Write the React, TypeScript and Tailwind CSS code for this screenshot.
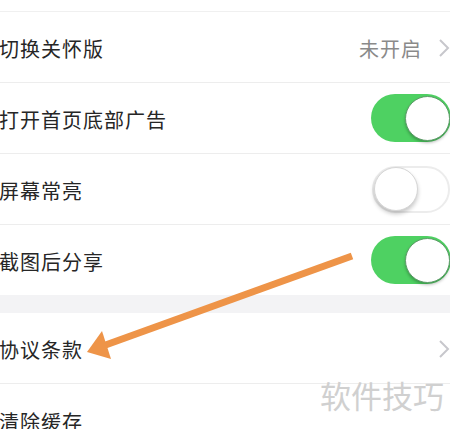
import React from "react";

function Toggle({ on }: { on: boolean }) {
  if (on) {
    return (
      <div className="w-[80px] h-[48px] rounded-full bg-[#4ed162] flex items-center justify-end pr-[1px] mr-[-1px]">
        <div className="w-[45px] h-[45px] rounded-full bg-white border border-[#5f9b6a] shadow-[0_2px_3px_rgba(0,0,0,0.25)]" />
      </div>
    );
  }
  return (
    <div className="w-[78px] h-[47px] rounded-full bg-white border-2 border-[#ececec] flex items-center justify-start">
      <div className="w-[44px] h-[44px] rounded-full bg-white border border-[#d6d6d6] shadow-[0_3px_4px_rgba(0,0,0,0.22)]" />
    </div>
  );
}

function Chevron() {
  return (
    <svg width="12" height="20" viewBox="0 0 12 20" className="ml-[16px] mt-[2px]">
      <path d="M2 2 L10 10 L2 18" fill="none" stroke="#c7c7cc" strokeWidth="2" />
    </svg>
  );
}

function Row({ label, children, border = true, h = "h-[71px]" }: { label: string; children?: React.ReactNode; border?: boolean; h?: string }) {
  return (
    <div className={`${h} flex items-center justify-between bg-white ${border ? "border-b border-[#ededed]" : ""}`}>
      <span className="ml-[-1px] pt-[4px] text-[20px] text-[#262626] tracking-[1px]">{label}</span>
      <div className="flex items-center">{children}</div>
    </div>
  );
}

export default function App() {
  return (
    <div className="relative w-[450px] h-[429px] overflow-hidden bg-white" style={{ fontFamily: '"Noto Sans CJK SC", "Noto Sans", sans-serif' }}>
      <div className="h-[12px] border-b border-[#f0f0f0]" />
      <Row label="切换关怀版">
        <span className="pt-[4px] text-[20px] text-[#8a8a8a] tracking-[1px]">未开启</span>
        <Chevron />
      </Row>
      <Row label="打开首页底部广告">
        <Toggle on />
      </Row>
      <Row label="屏幕常亮">
        <Toggle on={false} />
      </Row>
      <Row label="截图后分享" border={false} h="h-[70px]">
        <Toggle on />
      </Row>
      <div className="h-[18px] bg-[#f3f3f5]" />
      <Row label="协议条款">
        <Chevron />
      </Row>
      <Row label="清除缓存" border={false} />
      <div className="absolute right-[6px] top-[372px] text-[31px] text-[#d0d0d0]">软件技巧</div>
      <svg className="absolute left-0 top-0" width="450" height="429" viewBox="0 0 450 429">
        <line x1="352" y1="256" x2="100" y2="347" stroke="#ee9448" strokeWidth="7" />
        <polygon points="87,352 102,331 111,359" fill="#ee9448" />
      </svg>
    </div>
  );
}
